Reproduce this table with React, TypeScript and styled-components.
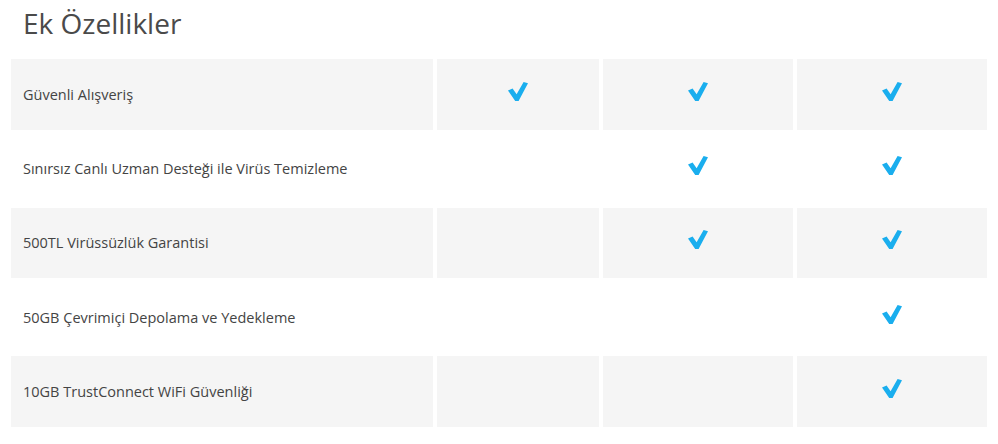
import React from "react";
import styled, { createGlobalStyle } from "styled-components";

const Global = createGlobalStyle`
  html, body { margin: 0; padding: 0; background: #fff; }
  body { font-family: "Open Sans", "Noto Sans", sans-serif; }
`;

const Page = styled.div`
  width: 998px;
  height: 444px;
  box-sizing: border-box;
  padding: 0 0 0 11px;
`;

const Title = styled.h2`
  margin: 0;
  padding: 5px 0 0 12px;
  height: 59px;
  box-sizing: border-box;
  font-size: 28px;
  font-weight: 400;
  color: #4a4a4a;
  line-height: 36px;
`;

const Table = styled.div`
  display: grid;
  grid-template-columns: 422px 162px 190px 190px;
  grid-auto-rows: 70.5px;
  column-gap: 4px;
  row-gap: 3.75px;
`;

const Cell = styled.div<{ $shaded: boolean; $label?: boolean }>`
  background: ${(p) => (p.$shaded ? "#f5f5f5" : "#fff")};
  display: flex;
  align-items: center;
  justify-content: ${(p) => (p.$label ? "flex-start" : "center")};
  padding: ${(p) => (p.$label ? "0 0 0 12px" : "0 0 6px 0")};
  box-sizing: border-box;
  font-size: 14.5px;
  color: #444;
`;

const Check = () => (
  <svg width="20" height="19" viewBox="0 0 20 19" aria-hidden>
    <polygon points="0,8.5 4.6,6.4 8.6,12.2 15.6,0 20,1.2 10.6,19 7.2,19" fill="#1aaeee" />
  </svg>
);

const rows: { label: string; checks: boolean[] }[] = [
  { label: "Güvenli Alışveriş", checks: [true, true, true] },
  { label: "Sınırsız Canlı Uzman Desteği ile Virüs Temizleme", checks: [false, true, true] },
  { label: "500TL Virüssüzlük Garantisi", checks: [false, true, true] },
  { label: "50GB Çevrimiçi Depolama ve Yedekleme", checks: [false, false, true] },
  { label: "10GB TrustConnect WiFi Güvenliği", checks: [false, false, true] },
];

export default function App() {
  return (
    <Page>
      <Global />
      <Title>Ek Özellikler</Title>
      <Table>
        {rows.map((r, i) => (
          <React.Fragment key={r.label}>
            <Cell $shaded={i % 2 === 0} $label>
              {r.label}
            </Cell>
            {r.checks.map((c, j) => (
              <Cell key={j} $shaded={i % 2 === 0}>
                {c ? <Check /> : null}
              </Cell>
            ))}
          </React.Fragment>
        ))}
      </Table>
    </Page>
  );
}
